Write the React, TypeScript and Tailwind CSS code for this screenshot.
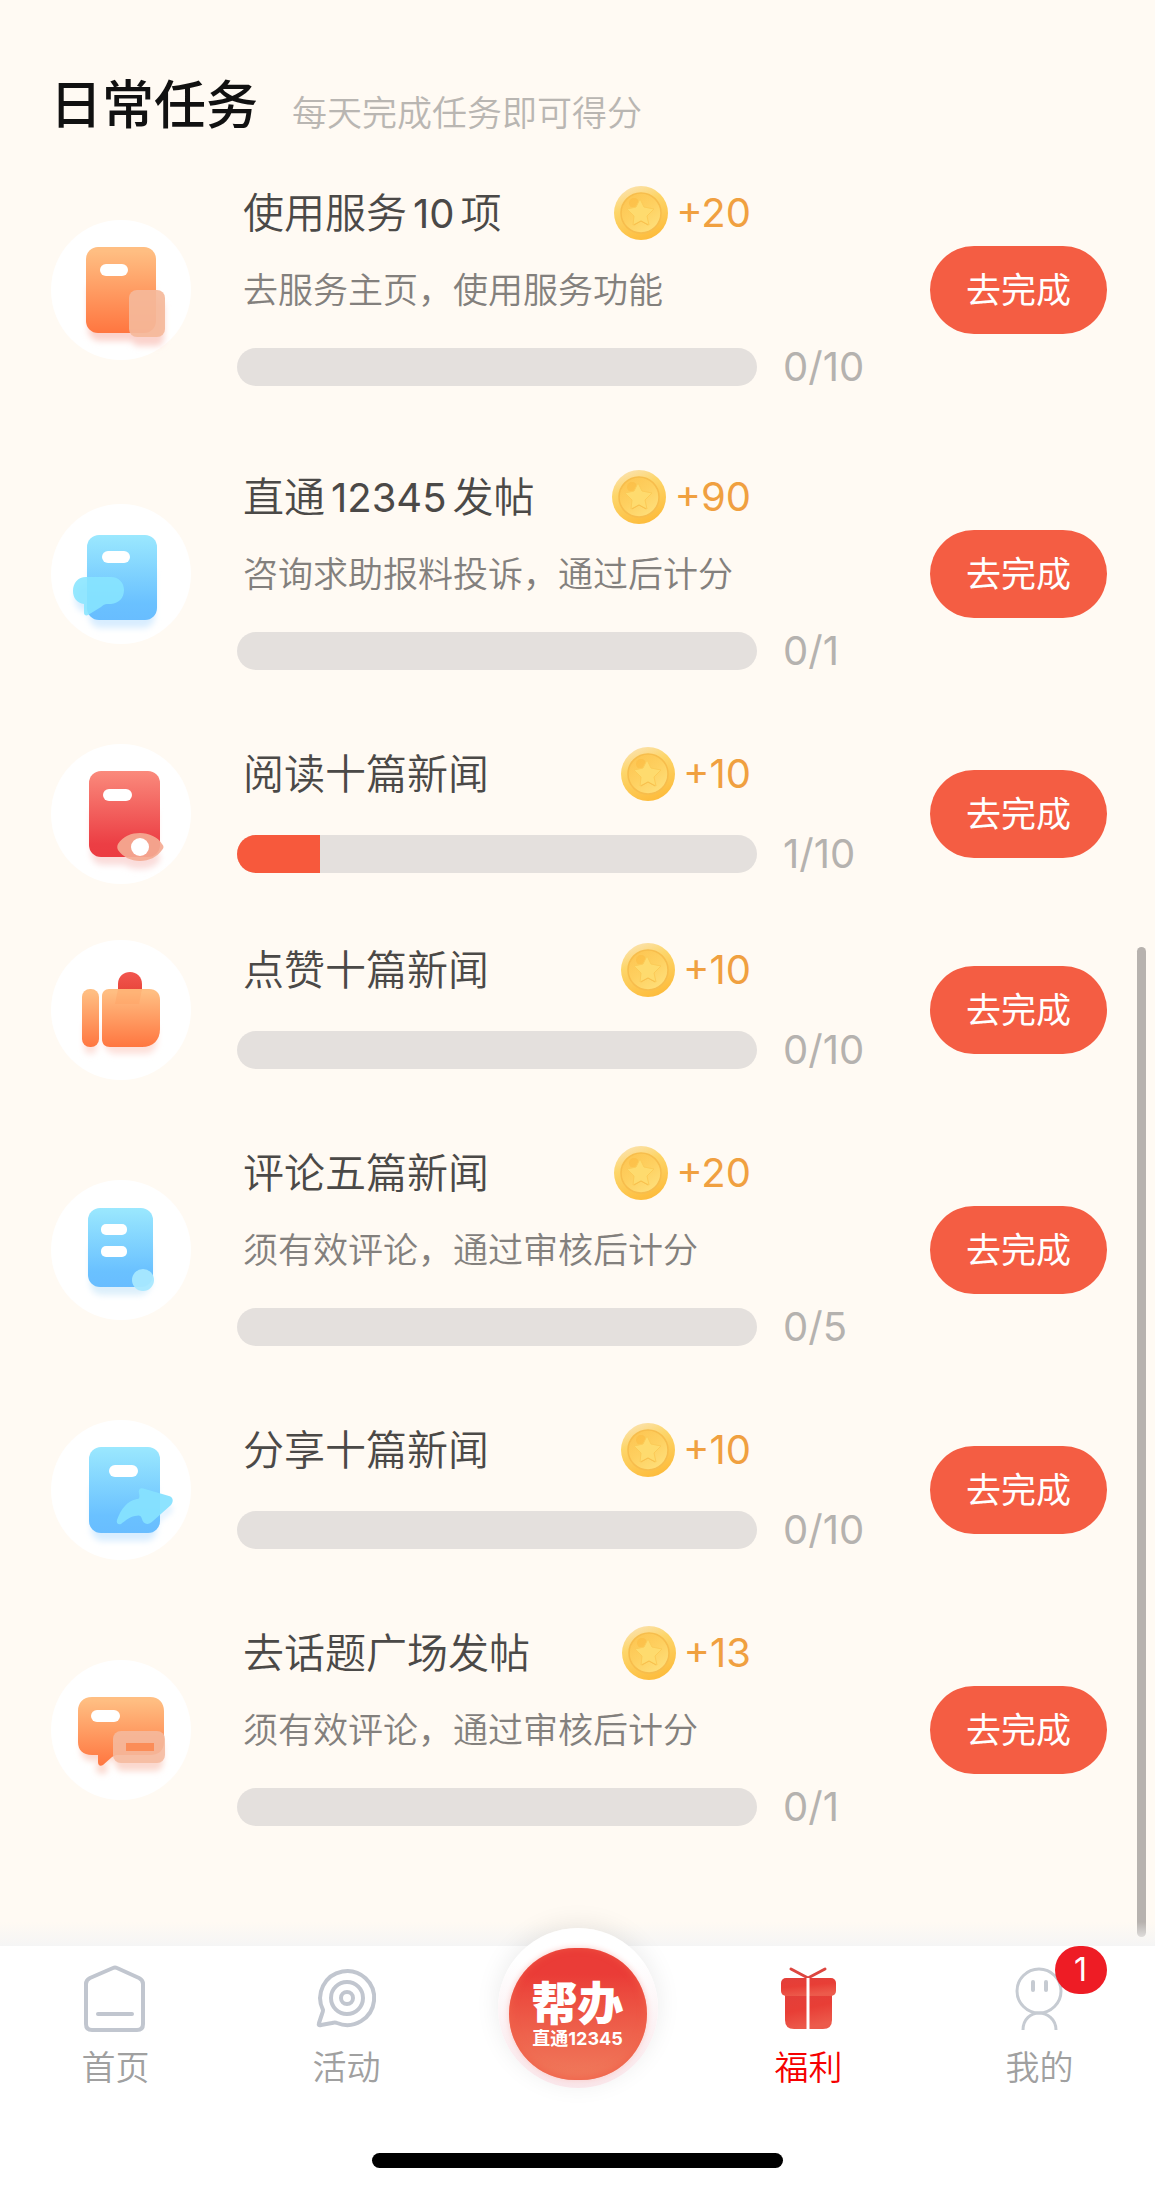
import React from 'react';

type Task = {
  title: string;
  desc?: string;
  points: number;
  done: number;
  total: number;
  icon: React.ReactNode;
};

const ORANGE = 'url(#orange)';
const BLUE = 'url(#blue)';
const RED = 'url(#red)';

function Gradients() {
  return (
    <svg width="0" height="0" className="absolute" aria-hidden="true">
      <defs>
        <linearGradient id="orange" x1="0" y1="0" x2="0" y2="1">
          <stop offset="0.05" stopColor="#ffbe82" />
          <stop offset="1" stopColor="#ff7640" />
        </linearGradient>
        <linearGradient id="blue" x1="0" y1="0" x2="0" y2="1">
          <stop offset="0" stopColor="#9be8fe" />
          <stop offset="0.8" stopColor="#6ac1ff" />
          <stop offset="1" stopColor="#68bdff" />
        </linearGradient>
        <linearGradient id="red" x1="0" y1="0" x2="0" y2="1">
          <stop offset="0" stopColor="#fa8a7c" />
          <stop offset="0.85" stopColor="#ec3e44" />
          <stop offset="1" stopColor="#ec3c42" />
        </linearGradient>
        <linearGradient id="thumb" x1="0" y1="0" x2="0" y2="1">
          <stop offset="0" stopColor="#f2564f" />
          <stop offset="1" stopColor="#e9473d" />
        </linearGradient>
        <linearGradient id="coin" x1="0.2" y1="0" x2="0.6" y2="1">
          <stop offset="0" stopColor="#fbe3b4" />
          <stop offset="0.35" stopColor="#fdd66b" />
          <stop offset="1" stopColor="#fdbc3c" />
        </linearGradient>
        <linearGradient id="coinInner" x1="0.1" y1="0" x2="0.8" y2="1">
          <stop offset="0" stopColor="#fdc450" />
          <stop offset="0.5" stopColor="#fed060" />
          <stop offset="1" stopColor="#fee07c" />
        </linearGradient>
        <linearGradient id="gift" x1="0" y1="0" x2="0.3" y2="1">
          <stop offset="0" stopColor="#e23f3a" />
          <stop offset="0.5" stopColor="#e83e36" />
          <stop offset="1" stopColor="#ec5a4b" />
        </linearGradient>
        <filter id="soft" x="-30%" y="-30%" width="160%" height="160%">
          <feGaussianBlur stdDeviation="3" />
        </filter>
      </defs>
    </svg>
  );
}

function ServiceIcon() {
  return (
    <>
      <g filter="url(#soft)" fill="#fbd3cc">
        <rect x="37" y="60" width="66" height="61" rx="12" />
        <rect x="80" y="80" width="33" height="46" rx="8" />
      </g>
      <rect x="35" y="27" width="70" height="86" rx="12" fill={ORANGE} />
      <rect x="49" y="44" width="28" height="12" rx="6" fill="#fff" />
      <rect x="78" y="70" width="36" height="47" rx="8" fill="#f5b89a" fillOpacity="0.92" />
    </>
  );
}

function HotlineIcon() {
  return (
    <>
      <g filter="url(#soft)" fill="#d8edff">
        <rect x="38" y="60" width="66" height="64" rx="12" />
        <rect x="24" y="80" width="40" height="28" rx="12" />
      </g>
      <rect x="36" y="31" width="70" height="85" rx="12" fill={BLUE} />
      <rect x="51" y="47" width="28" height="12" rx="6" fill="#fff" />
      <path
        d="M35 73H60C68 73 73 79 73 86C73 94 68 99 60 100H56C54 100 52 101 50 103L37 111C35 112 33 111 33 109V100C26 99 22 94 22 87C22 79 27 73 35 73Z"
        fill="#87e5ff"
        fillOpacity="0.88"
      />
    </>
  );
}

function ReadIcon() {
  return (
    <>
      <g filter="url(#soft)" fill="#fadcda">
        <rect x="40" y="60" width="66" height="61" rx="12" />
        <ellipse cx="89" cy="114" rx="20" ry="11" />
      </g>
      <rect x="38" y="27" width="71" height="86" rx="12" fill={RED} />
      <rect x="52" y="45" width="29" height="12" rx="6" fill="#fff" />
      <path
        d="M67 100C72 92 81 89 89 89C98 89 107 93 111 100C113 102 113 104 111 106C106 113 98 117 89 117C80 117 72 113 67 106C66 104 66 102 67 100Z"
        fill="#f4aa93"
        fillOpacity="0.92"
      />
      <circle cx="89" cy="103" r="9" fill="#fff" />
    </>
  );
}

function LikeIcon() {
  return (
    <>
      <g filter="url(#soft)" fill="#fde0da">
        <rect x="33" y="80" width="13" height="34" rx="6" />
        <rect x="53" y="80" width="53" height="34" rx="12" />
      </g>
      <rect x="31" y="49" width="17" height="58" rx="8" fill={ORANGE} />
      <path d="M67 50V44C67 36 73 32 79 32C86 32 91 37 91 44V50Z" fill="url(#thumb)" />
      <path
        d="M58 49H98C105 49 109 53 109 60V89C109 100 102 107 91 107H59C54 107 51 104 51 99V56C51 52 54 49 58 49Z"
        fill={ORANGE}
      />
      <path d="M67 49H91L88 64H64Z" fill="#ff9d5c" fillOpacity="0.3" />
    </>
  );
}

function CommentIcon() {
  return (
    <>
      <rect x="39" y="60" width="61" height="55" rx="12" fill="#dceffb" filter="url(#soft)" />
      <rect x="37" y="28" width="65" height="79" rx="12" fill={BLUE} />
      <rect x="50" y="44" width="26" height="11" rx="5" fill="#fff" />
      <rect x="50" y="66" width="26" height="11" rx="5" fill="#fff" />
      <circle cx="92" cy="100" r="11" fill="#a8e8ff" fillOpacity="0.95" />
    </>
  );
}

function ShareIcon() {
  return (
    <>
      <g filter="url(#soft)" fill="#d8edff">
        <rect x="40" y="60" width="66" height="61" rx="12" />
        <path d="M95 112L122 90L118 84Z" />
      </g>
      <rect x="38" y="27" width="71" height="86" rx="12" fill={BLUE} />
      <rect x="58" y="45" width="29" height="12" rx="6" fill="#fff" />
      <path
        d="M88 73C87 69 90 67 94 69L118 76C122 77 123 81 120 85L102 101C97 106 92 104 91 99C90 95 88 95 84 96C78 97 74 101 70 104C67 105 65 103 66 100C70 89 76 81 86 79C88 79 89 78 88 73Z"
        fill="#86e1ff"
        fillOpacity="0.94"
      />
    </>
  );
}

function TopicIcon() {
  return (
    <>
      <g filter="url(#soft)" fill="#fbd8ce">
        <rect x="30" y="70" width="40" height="31" rx="10" />
        <rect x="64" y="80" width="48" height="31" rx="8" />
        <circle cx="51" cy="108" r="6" />
      </g>
      <path
        d="M41 37H99C108 37 113 43 113 51V82C113 91 107 95 99 95H66C64 95 63 96 61 97L52 105C49 107 47 105 47 102V95H41C32 95 27 90 27 82V51C27 43 32 37 41 37Z"
        fill={ORANGE}
      />
      <rect x="40" y="50" width="29" height="12" rx="6" fill="#fff" />
      <rect x="62" y="71" width="52" height="32" rx="8" fill="#f5b99e" fillOpacity="0.88" />
      <rect x="75" y="83" width="28" height="8" fill="#fb8d58" />
    </>
  );
}

function Coin() {
  return (
    <svg viewBox="0 0 54 54" className="size-[54px] shrink-0" aria-hidden="true">
      <circle cx="27" cy="27" r="27" fill="url(#coin)" />
      <circle cx="27" cy="27" r="20" fill="url(#coinInner)" stroke="#f7bd4c" strokeWidth="1.5" />
      <circle cx="20" cy="17" r="5" fill="#fcba3d" fillOpacity="0.5" />
      <path
        d="M26 13L30 21L40 23L33 30L35 39L27 35L19 39L20 30L13 23L22 21Z"
        fill="#fedb6e"
        stroke="#fccb57"
        strokeWidth="1"
        strokeLinejoin="round"
      />
      <path d="M20 39L27 35L34 39" fill="none" stroke="#f8c04e" strokeWidth="1" />
    </svg>
  );
}

const tasks: Task[] = [
  { title: '使用服务10项', desc: '去服务主页，使用服务功能', points: 20, done: 0, total: 10, icon: <ServiceIcon /> },
  { title: '直通12345发帖', desc: '咨询求助报料投诉，通过后计分', points: 90, done: 0, total: 1, icon: <HotlineIcon /> },
  { title: '阅读十篇新闻', points: 10, done: 1, total: 10, icon: <ReadIcon /> },
  { title: '点赞十篇新闻', points: 10, done: 0, total: 10, icon: <LikeIcon /> },
  { title: '评论五篇新闻', desc: '须有效评论，通过审核后计分', points: 20, done: 0, total: 5, icon: <CommentIcon /> },
  { title: '分享十篇新闻', points: 10, done: 0, total: 10, icon: <ShareIcon /> },
  { title: '去话题广场发帖', desc: '须有效评论，通过审核后计分', points: 13, done: 0, total: 1, icon: <TopicIcon /> },
];

// A started bar shows at least its rounded cap in addition to the real share.
const fillWidth = (done: number, total: number) => (done === 0 ? 0 : (done / total) * 100 + 6);

// Numbers inside Chinese text get a little room on both sides.
function spaced(text: string) {
  return text.split(/(\d+)/).map((part, i) =>
    /^\d+$/.test(part) ? (
      <span key={i} className="mx-1.5 text-[40px] font-normal">
        {part}
      </span>
    ) : (
      part
    ),
  );
}

function TaskRow({ task }: { task: Task }) {
  const { title, desc, points, done, total, icon } = task;
  return (
    <li className={`flex items-center pl-[51px] pr-12 ${desc ? 'h-[284px]' : 'h-[196px]'}`}>
      <svg viewBox="0 0 140 140" className="size-[140px] shrink-0" aria-hidden="true">
        <circle cx="70" cy="70" r="70" fill="#fff" />
        {icon}
      </svg>
      <div className="ml-[46px] grid min-w-0 flex-1 grid-cols-[1fr_147px] gap-x-[26px] pb-2">
        <div className="flex h-[54px] items-center justify-between pl-1.5 pr-1.5">
          <h2 className="whitespace-nowrap text-[41px] font-[350] leading-[54px] text-[#4b4947]">{spaced(title)}</h2>
          <div className="flex items-center gap-2">
            <Coin />
            <span className="text-[40px] leading-[54px] text-[#f0a040]">+{points}</span>
          </div>
        </div>
        {desc && (
          <p className="col-span-2 mt-[25px] whitespace-nowrap pl-1.5 text-[35px] font-[350] leading-[50px] text-[#83807d]">
            {desc}
          </p>
        )}
        <div
          role="progressbar"
          aria-label={title}
          aria-valuenow={done}
          aria-valuemax={total}
          className={`col-start-1 h-[38px] overflow-hidden rounded-full bg-[#e4e0dd] ${desc ? 'mt-[33px]' : 'mt-[34px]'}`}
        >
          <div className="h-full bg-[#f7593c]" style={{ width: `${fillWidth(done, total)}%` }} />
        </div>
        <span className={`text-[40px] leading-[38px] text-[#b5b2af] ${desc ? 'mt-[33px]' : 'mt-[34px]'}`}>
          {done}/{total}
        </span>
      </div>
      <button type="button" className="h-[88px] w-[177px] shrink-0 rounded-full bg-[#f45d43] text-[35px] text-white">
        去完成
      </button>
    </li>
  );
}

function NavItem({ label, active, badge, children }: { label: string; active?: boolean; badge?: number; children: React.ReactNode }) {
  return (
    <li className="flex-1">
      <a href="#" aria-current={active ? 'page' : undefined} className="flex flex-col items-center">
        <span className="relative">
          <svg viewBox="0 0 68 68" className="size-[68px]" fill="none" strokeLinecap="round" strokeLinejoin="round" aria-hidden="true">
            {children}
          </svg>
          {badge && (
            <span className="absolute -right-[33px] -top-[18px] flex h-12 w-[52px] items-center justify-center rounded-full bg-[#ee1c25] text-[32px] text-white">
              {badge}
            </span>
          )}
        </span>
        <span className={`mt-[11px] text-[34px] font-[350] leading-[50px] ${active ? 'text-[#f50000]' : 'text-[#a0a0a0]'}`}>
          {label}
        </span>
      </a>
    </li>
  );
}

export default function App() {
  return (
    <div className="relative flex min-h-screen flex-col bg-[#fffaf3] font-['Inter','Noto_Sans_CJK_SC',sans-serif]">
      <Gradients />
      <main className="relative flex-1 pb-[74px]">
        <header className="flex h-[148px] items-end pb-[10px] pl-[50px]">
          <h1 className="text-[52px] font-medium leading-[64px] text-[#111]">日常任务</h1>
          <p className="ml-[34px] text-[35px] font-[350] leading-[50px] text-[#b9b6b2]">每天完成任务即可得分</p>
        </header>
        <ul>
          {tasks.map((task) => (
            <TaskRow key={task.title} task={task} />
          ))}
        </ul>
        <div className="absolute bottom-[9px] right-[9px] h-[990px] w-[9px] rounded-full bg-[#b7b2ae]" />
      </main>

      <div className="relative -mt-6 h-6 bg-gradient-to-b from-transparent to-[#f5f5f5]" />
      <nav className="relative bg-white pb-[23px]">
        <ul className="flex h-[146px] items-start pt-[18px]">
          <NavItem label="首页">
            <g stroke="#c1c6cf" strokeWidth="4">
              <path d="M31 4Q33 3 35 4L57 14Q61 16 61 20V60Q61 66 55 66H10Q4 66 4 60V20Q4 16 8 14Z" />
              <path d="M16 50H50" />
            </g>
          </NavItem>
          <NavItem label="活动">
            <g stroke="#c1c6cf" strokeWidth="4">
              <path d="M10 46A27 27 0 1 1 24 59Q22 58 19 59L8 61Q5 62 6 59L9 50Q10 48 10 46Z" />
              <circle cx="34" cy="34" r="16" />
              <circle cx="34" cy="34" r="6" />
            </g>
          </NavItem>
          <li className="flex flex-1 justify-center">
            <button
              type="button"
              className="-mt-9 flex size-40 shrink-0 items-center justify-center rounded-full bg-gradient-to-b from-white from-20% to-[#f9e6ea] shadow-[0_-4px_24px_rgba(0,0,0,0.08)]"
            >
              <span className="mt-3 flex h-[132px] w-[138px] flex-col items-center justify-center rounded-full bg-gradient-to-b from-[#ea3c37] from-20% to-[#f07a5c] text-white shadow-[inset_0_-2px_8px_#f0624a,0_0_6px_#f9c9c6]">
                <span className="text-[46px] font-black leading-[50px]">帮办</span>
                <span className="whitespace-nowrap text-[18px] font-bold leading-[22px]">直通12345</span>
              </span>
            </button>
          </li>
          <NavItem label="福利" active>
            <path d="M16 5L33 14L50 5" stroke="#dc4640" strokeWidth="3" />
            <path d="M10 30H57V56Q57 65 48 65H19Q10 65 10 56Z" fill="url(#gift)" />
            <rect x="6" y="14" width="55" height="18" rx="5" fill="url(#gift)" />
            <path d="M33 14V65" stroke="#fff" strokeWidth="3" strokeLinecap="butt" />
          </NavItem>
          <NavItem label="我的" badge={1}>
            <g stroke="#c6cbd2" strokeWidth="3">
              <circle cx="33" cy="27" r="22" />
              <path d="M17 66C17 55 25 49 33 49S50 55 50 66" strokeLinecap="butt" />
              <path d="M27 18V26M40 18V26" strokeWidth="4" />
            </g>
          </NavItem>
        </ul>
        <div className="mx-auto mt-[61px] h-[15px] w-[411px] rounded-full bg-black" />
      </nav>
    </div>
  );
}
